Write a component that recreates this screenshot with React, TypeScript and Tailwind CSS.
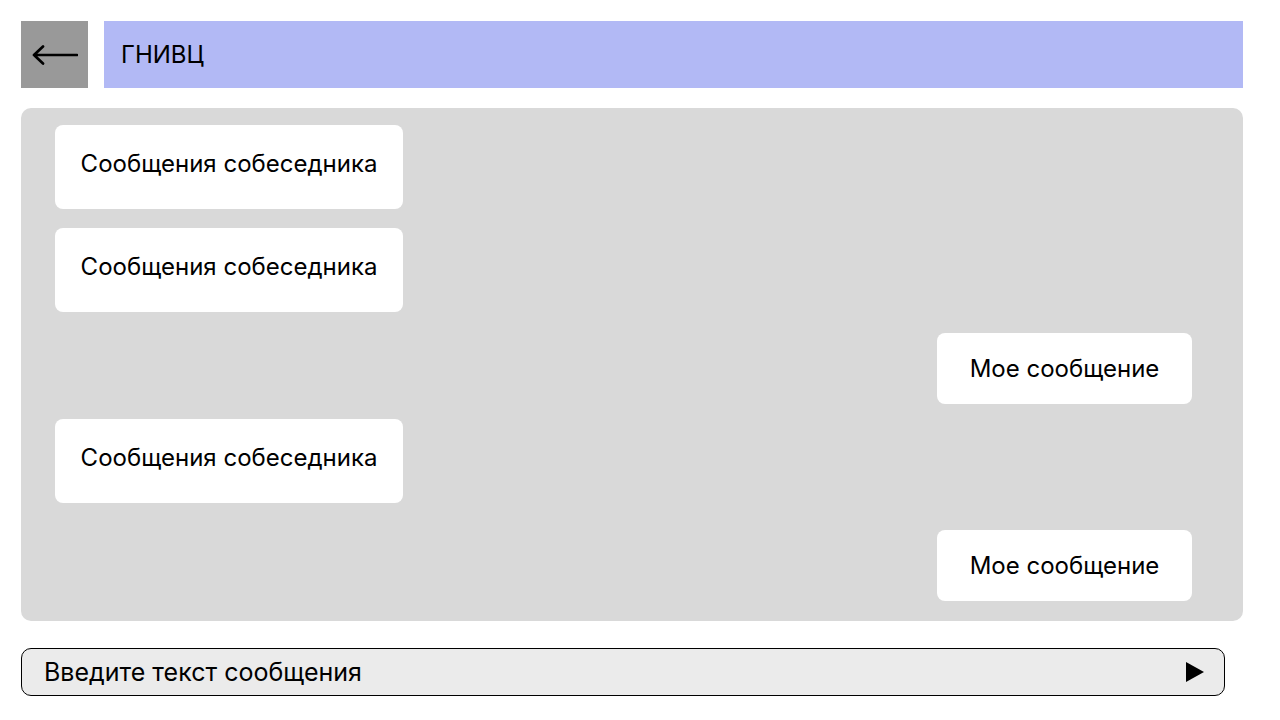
const font = { fontFamily: "Inter, 'Noto Sans', sans-serif" };

function PeerBubble({ className = "" }: { className?: string }) {
  return (
    <div
      className={`flex h-[84px] w-[348px] items-center justify-center rounded-lg bg-white pb-[6px] text-[24px] text-black ${className}`}
    >
      Сообщения собеседника
    </div>
  );
}

function MyBubble({ className = "" }: { className?: string }) {
  return (
    <div
      className={`flex h-[71px] w-[255px] items-center justify-center self-end rounded-lg bg-white text-[24px] text-black ${className}`}
    >
      Мое сообщение
    </div>
  );
}

export default function App() {
  return (
    <div className="min-h-screen w-[1280px] bg-white p-[21px] pr-[37px]" style={font}>
      {/* Header */}
      <div className="flex h-[67px] gap-4">
        <button className="flex w-[67px] items-center justify-center bg-[#999999]">
          <svg width="46" height="20" viewBox="0 0 46 20" fill="none">
            <path
              d="M45 10H2M11 1.5L2 10l9 8.5"
              stroke="black"
              strokeWidth="2.7"
              strokeLinecap="round"
              strokeLinejoin="round"
            />
          </svg>
        </button>
        <div className="flex flex-1 items-center bg-[#b2b9f5] pl-[17px] text-[24px] text-black">
          ГНИВЦ
        </div>
      </div>

      {/* Chat */}
      <div className="mt-5 flex h-[513px] flex-col rounded-[10px] bg-[#d9d9d9] pl-[34px] pr-[51px] pt-[17px]">
        <PeerBubble />
        <PeerBubble className="mt-[19px]" />
        <MyBubble className="mt-[21px]" />
        <PeerBubble className="mt-[15px]" />
        <MyBubble className="mt-[27px]" />
      </div>

      {/* Input */}
      <div className="mt-[27px] flex h-[48px] w-[1204px] items-center rounded-[10px] border border-black bg-[#ebebeb] pl-[22px] pr-[19px]">
        <input
          className="flex-1 bg-transparent pt-[2px] text-[25px] text-black outline-none placeholder:text-black"
          placeholder="Введите текст сообщения"
          style={font}
        />
        <svg width="20" height="22" viewBox="0 0 20 22">
          <path d="M1 1L19 11L1 21Z" fill="black" />
        </svg>
      </div>
    </div>
  );
}
